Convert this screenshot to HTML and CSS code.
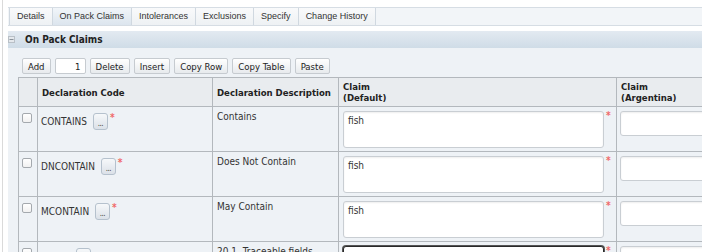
FILE: index.html
```html
<!DOCTYPE html>
<html lang="en">
<head>
    <meta charset="UTF-8">
    <meta name="viewport" content="width=device-width, initial-scale=1.0">
    <title>On Pack Claims</title>
    <link rel="stylesheet" href="styles.css">
</head>
<body>

<div class="page">
    <div class="panel">
        <ul class="tabs">
            <li>Details</li>
            <li class="active">On Pack Claims</li>
            <li>Intolerances</li>
            <li>Exclusions</li>
            <li>Specify</li>
            <li>Change History</li>
        </ul>

        <div class="section-head">
            <svg class="toggle" width="7" height="7" viewBox="0 0 7 7">
                <rect x="0.5" y="0.5" width="6" height="6" fill="#e4e8ec" stroke="#b9c0c7"/>
                <rect x="1.5" y="3" width="4" height="1" fill="#8a929a"/>
            </svg>
            On Pack Claims
        </div>

        <div class="section-body">
            <div class="toolbar">
                <button class="btn">Add</button>
                <input class="count" type="text" value="1">
                <button class="btn">Delete</button>
                <button class="btn">Insert</button>
                <button class="btn">Copy Row</button>
                <button class="btn">Copy Table</button>
                <button class="btn">Paste</button>
            </div>

            <table class="grid">
                <colgroup>
                    <col class="c-check">
                    <col class="c-code">
                    <col class="c-desc">
                    <col class="c-claim">
                    <col class="c-claim">
                </colgroup>
                <thead>
                    <tr>
                        <th></th>
                        <th>Declaration Code</th>
                        <th>Declaration Description</th>
                        <th>Claim<br>(Default)</th>
                        <th>Claim<br>(Argentina)</th>
                    </tr>
                </thead>
                <tbody>
                    <tr>
                        <td><div class="check-cell"><input type="checkbox" class="check"></div></td>
                        <td><div class="code-cell">CONTAINS <span class="pick">...</span><span class="req">*</span></div></td>
                        <td><div class="desc-cell">Contains</div></td>
                        <td><div class="claim-cell"><textarea class="claim">fish</textarea><span class="req">*</span></div></td>
                        <td><div class="alt-cell"><textarea class="claim short"></textarea></div></td>
                    </tr>
                    <tr>
                        <td><div class="check-cell"><input type="checkbox" class="check"></div></td>
                        <td><div class="code-cell">DNCONTAIN <span class="pick">...</span><span class="req">*</span></div></td>
                        <td><div class="desc-cell">Does Not Contain</div></td>
                        <td><div class="claim-cell"><textarea class="claim">fish</textarea><span class="req">*</span></div></td>
                        <td><div class="alt-cell"><textarea class="claim short"></textarea></div></td>
                    </tr>
                    <tr>
                        <td><div class="check-cell"><input type="checkbox" class="check"></div></td>
                        <td><div class="code-cell">MCONTAIN <span class="pick">...</span><span class="req">*</span></div></td>
                        <td><div class="desc-cell">May Contain</div></td>
                        <td><div class="claim-cell"><textarea class="claim">fish</textarea><span class="req">*</span></div></td>
                        <td><div class="alt-cell"><textarea class="claim short"></textarea></div></td>
                    </tr>
                    <tr>
                        <td><div class="check-cell"><input type="checkbox" class="check"></div></td>
                        <td><div class="code-cell">TRACE <span class="pick">...</span></div></td>
                        <td><div class="desc-cell">20.1. Traceable fields</div></td>
                        <td><div class="claim-cell"><textarea class="claim focused"></textarea><span class="req">*</span></div></td>
                        <td><div class="alt-cell"><textarea class="claim short"></textarea></div></td>
                    </tr>
                </tbody>
            </table>
        </div>
    </div>
</div>

</body>
</html>
```

FILE: styles.css
```css
html, body {
    margin: 0;
    padding: 0;
    overflow: hidden;
    background-color: #fff;
}
body {
    font-family: "DejaVu Sans Condensed", "DejaVu Sans", sans-serif;
    font-size: 10px;
    color: #333;
}
.page {
    margin-left: 2px;
    border-left: 1px solid #dadada;
    height: 252px;
    padding: 7px 0 0 5px;
    box-sizing: border-box;
}
.panel {
    width: 694px;
    height: 245px;
    overflow: hidden;
}

/* tabs */
.tabs {
    display: flex;
    list-style: none;
    margin: 0;
    padding: 0 0 0 1px;
    height: 17px;
    border-top: 1px solid #d6dde4;
    border-bottom: 1px solid #d6dde4;
    background-color: #f2f5f8;
    font-family: "Liberation Sans", Arial, sans-serif;
    font-size: 9px;
}
.tabs li {
    padding: 0 7px;
    line-height: 17px;
    color: #333;
    border-right: 1px solid #d0d8e0;
    background: linear-gradient(#f9fafb, #eef1f4);
}
.tabs li:first-child {
    border-left: 1px solid #d0d8e0;
}
.tabs li.active {
    background: linear-gradient(#f1f5f9, #dce5ee);
}

/* section */
.section-head {
    display: flex;
    align-items: center;
    margin-top: 5px;
    height: 17px;
    background: linear-gradient(#e3eaf1, #cfdce7);
    font-weight: bold;
    font-size: 10px;
    color: #222;
}
.section-head .toggle {
    margin: 0 10px 0 0;
}
.section-body {
    background-color: #eef2f6;
    padding: 10px 0 0 10px;
    height: 200px;
}

/* toolbar */
.toolbar {
    display: flex;
    gap: 4px;
    margin-left: 4px;
    margin-bottom: 3px;
    height: 16px;
}
.btn {
    font-family: inherit;
    font-size: 9.5px;
    height: 16px;
    padding: 0 5px;
    margin: 0;
    border: 1px solid #c6cbd0;
    border-radius: 2px;
    background: linear-gradient(#ffffff, #e7eaed);
    color: #222;
}
.count {
    width: 31px;
    height: 16px;
    box-sizing: border-box;
    margin: 0;
    border: 1px solid #c6cbd0;
    border-radius: 2px;
    padding: 0 4px 0 0;
    text-align: right;
    font-family: inherit;
    font-size: 9.5px;
    color: #222;
}

/* grid */
.grid {
    border-collapse: collapse;
    table-layout: fixed;
    width: 876px;
}
.grid .c-check { width: 19px; }
.grid .c-code { width: 175px; }
.grid .c-desc { width: 126px; }
.grid .c-claim { width: 278px; }
.grid th, .grid td {
    border: 1px solid #b3b8bd;
    padding: 0;
}
.grid th {
    height: 28px;
    background-color: #e9ecef;
    text-align: left;
    vertical-align: middle;
    padding: 0 4px;
    font-size: 9.5px;
    line-height: 11px;
    color: #222;
}
.grid td {
    height: 44px;
    vertical-align: top;
    background-color: #eef2f6;
}
.check-cell {
    padding: 6px 0 0 3px;
}
.check {
    appearance: none;
    -webkit-appearance: none;
    display: block;
    width: 10px;
    height: 10px;
    margin: 0;
    border: 1px solid #a4a9ae;
    border-radius: 2px;
    background: linear-gradient(#ffffff, #f1f1f1);
}
.code-cell {
    display: flex;
    align-items: center;
    padding: 6px 4px 0 3px;
    white-space: pre;
}
.pick {
    display: flex;
    justify-content: center;
    align-items: flex-end;
    width: 15px;
    height: 17px;
    box-sizing: border-box;
    margin-left: 3px;
    padding-bottom: 1px;
    border: 1px solid #b5c1cd;
    border-radius: 3px;
    background: linear-gradient(#f6f8fa, #dbe1e8);
    font-size: 8px;
    line-height: 8px;
    color: #444;
    letter-spacing: -0.5px;
}
.req {
    align-self: flex-start;
    margin: 0 0 0 2px;
    color: #f06a6a;
    font-size: 10px;
    line-height: 10px;
    font-weight: bold;
}
.desc-cell {
    padding: 4px 4px 0 4px;
    line-height: 12px;
}
.claim-cell {
    display: flex;
    align-items: flex-start;
    padding: 4px 0 0 4px;
}
.alt-cell {
    padding: 4px 0 0 3px;
}
.claim {
    display: block;
    width: 261px;
    height: 37px;
    box-sizing: border-box;
    margin: 0;
    padding: 3px 4px;
    border: 1px solid #c9ced3;
    border-radius: 3px;
    box-shadow: inset 0 1px 2px rgba(0, 0, 0, 0.07);
    background-color: #fff;
    resize: none;
    font-family: inherit;
    font-size: 10px;
    color: #333;
}
.claim.short {
    height: 25px;
    width: 262px;
}
.claim.focused {
    border: 1px solid #2a2a2a;
    box-shadow: 0 0 0 1px #555;
}
```
